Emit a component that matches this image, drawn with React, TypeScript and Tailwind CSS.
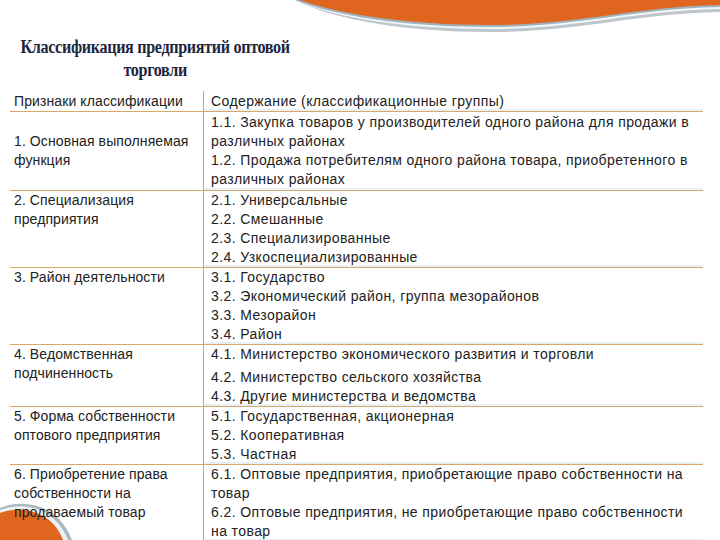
const rows: { label: string[]; items: string[]; center?: boolean; gapAt?: number }[] = [
  {
    label: ["1. Основная выполняемая", "функция"],
    items: [
      "1.1. Закупка товаров у производителей одного района для продажи в",
      "различных районах",
      "1.2. Продажа потребителям одного района товара, приобретенного в",
      "различных районах",
    ],
    center: true,
  },
  {
    label: ["2. Специализация", "предприятия"],
    items: ["2.1. Универсальные", "2.2. Смешанные", "2.3. Специализированные", "2.4. Узкоспециализированные"],
  },
  {
    label: ["3. Район деятельности"],
    items: ["3.1. Государство", "3.2. Экономический район, группа мезорайонов", "3.3. Мезорайон", "3.4. Район"],
  },
  {
    label: ["4. Ведомственная", "подчиненность"],
    items: [
      "4.1. Министерство экономического развития и торговли",
      "4.2. Министерство сельского хозяйства",
      "4.3. Другие министерства и ведомства",
    ],
    gapAt: 1,
  },
  {
    label: ["5. Форма собственности", "оптового предприятия"],
    items: ["5.1. Государственная, акционерная", "5.2. Кооперативная", "5.3. Частная"],
  },
  {
    label: ["6. Приобретение права", "собственности на", "продаваемый товар"],
    items: [
      "6.1. Оптовые предприятия, приобретающие право собственности на",
      "товар",
      "6.2. Оптовые предприятия, не приобретающие право собственности",
      "на товар",
    ],
  },
];

function TopWave() {
  return (
    <svg className="absolute right-0 top-0" width="425" height="40" viewBox="0 0 425 40">
      <path d="M0 0 C40 20 110 32 195 32 C285 32 335 14 425 12 L425 0 Z" fill="#bcc6cc" />
      <path d="M0 0 C40 18 110 29 195 29 C285 29 335 11 425 9 L425 0 Z" fill="#f4f7f8" />
      <path d="M0 0 C40 16 110 27 195 27 C285 27 335 9 425 7 L425 0 Z" fill="#9fb3bf" />
      <path d="M4 0 C44 14 112 25 195 25 C285 25 335 7 425 5 L425 0 Z" fill="#e0661f" />
    </svg>
  );
}

function CornerBlob() {
  return (
    <svg className="absolute bottom-0 left-0" width="80" height="46" viewBox="0 0 80 46">
      <path d="M0 14 C24 4 58 10 72 46 L0 46 Z" fill="#aab8c0" />
      <path d="M0 16 C23 7 55 13 68 46 L0 46 Z" fill="#eef2f4" />
      <path d="M0 19 C22 11 52 17 63 46 L0 46 Z" fill="#e0661f" />
    </svg>
  );
}

export default function App() {
  return (
    <div
      className="relative w-[720px] h-[540px] overflow-hidden bg-white text-[#222]"
      style={{ fontFamily: '"Liberation Sans", Arial, sans-serif' }}
    >
      <TopWave />
      <CornerBlob />

      <h1
        className="ml-[20px] w-[318px] origin-top-left scale-x-[0.85] pt-[35px] text-center text-[19px] font-bold leading-[23px] tracking-[-0.4px] whitespace-nowrap text-[#1c2640]"
        style={{ fontFamily: '"Liberation Serif", "Times New Roman", serif' }}
      >
        Классификация предприятий оптовой
        <br />
        торговли
      </h1>

      <div className="relative z-10 ml-[10px] mt-[10px] w-[693px] text-[14px] leading-[19px] whitespace-nowrap">
        <div className="grid grid-cols-[193px_1fr] border-b border-[#d9a66c]">
          <div className="pl-[4px] pt-[1px] tracking-[0.1px]">Признаки классификации</div>
          <div className="border-l border-[#cfa273] pl-[7px] pt-[1px] tracking-[0.4px] shadow-[inset_0_-2px_0_#e8f1f5]">
            Содержание (классификационные группы)
          </div>
        </div>

        {rows.map((row, i) => (
          <div
            key={i}
            className={`grid grid-cols-[193px_1fr] ${i < rows.length - 1 ? "border-b border-[#d9a66c]" : ""}`}
          >
            <div
              className={`pl-[4px] tracking-[0.1px] ${i === 0 ? "py-[1px]" : ""} ${row.center ? "flex flex-col justify-center" : ""}`}
            >
              {row.label.map((l, j) => (
                <div key={j}>{l}</div>
              ))}
            </div>
            <div
              className={`border-l border-[#cfa273] pl-[7px] tracking-[0.4px] shadow-[inset_0_-2px_0_#e8f1f5] ${i === 0 ? "py-[1px]" : ""}`}
            >
              {row.items.map((t, j) => (
                <div key={j} className={row.gapAt === j ? "mt-[4px]" : ""}>
                  {t}
                </div>
              ))}
            </div>
          </div>
        ))}
      </div>
    </div>
  );
}
